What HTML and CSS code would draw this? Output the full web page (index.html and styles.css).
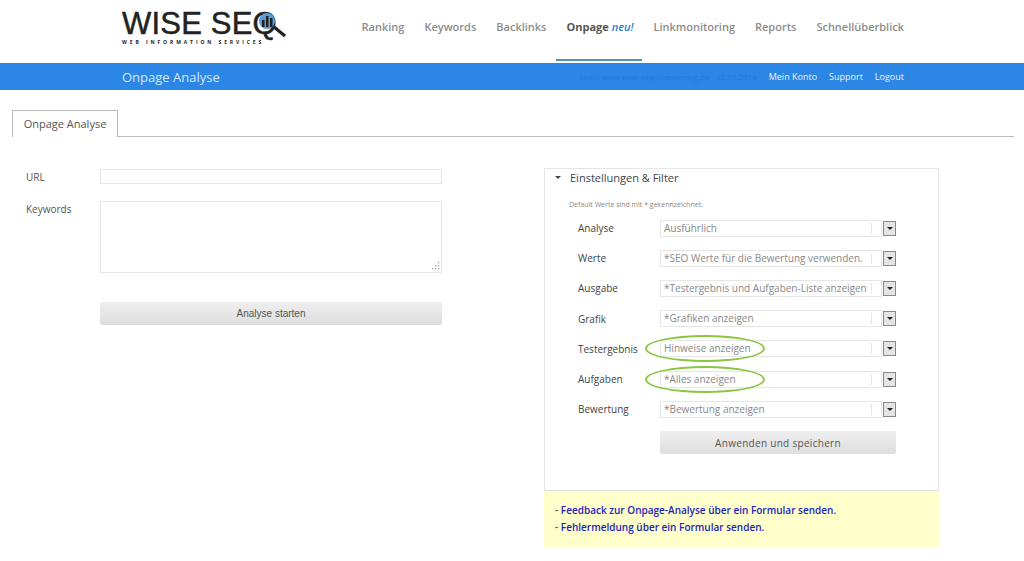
FILE: index.html
```html
<!DOCTYPE html>
<html lang="de">
<head>
  <meta charset="UTF-8">
  <title>Onpage Analyse</title>
  <link rel="stylesheet" href="styles.css">
</head>
<body>
  <!-- Logo and main navigation -->
  <header class="top">
    <div class="logo">
      <div class="logo-word">WISE SE<span class="logo-q">Q<svg class="logo-glass" viewBox="0 0 34 30" width="34" height="30">
        <circle cx="13" cy="13" r="8" fill="#5b9bd5"/>
        <rect x="8" y="12" width="2.5" height="7" fill="#222"/>
        <rect x="12" y="8" width="2.5" height="11" fill="#222"/>
        <rect x="16" y="10" width="2.5" height="9" fill="#222"/>
        <path d="M20 19 L31 28" stroke="#222" stroke-width="3.2" fill="none"/>
      </svg></span></div>
      <div class="logo-sub">WEB INFORMATION SERVICES</div>
    </div>
    <nav class="nav">
      <a>Ranking</a>
      <a>Keywords</a>
      <a>Backlinks</a>
      <a class="active">Onpage <em>neu!</em></a>
      <a>Linkmonitoring</a>
      <a>Reports</a>
      <a>Schnellüberblick</a>
    </nav>
  </header>

  <div class="bar">
    <div class="bar-title">Onpage Analyse</div>
    <div class="bar-hidden">Hallo www.wise-seq-monitoring.de &nbsp; 12.05.2014</div>
    <div class="bar-links">
      <a>Mein Konto</a>
      <a>Support</a>
      <a>Logout</a>
    </div>
  </div>

  <div class="tabs">
    <div class="tab">Onpage Analyse</div>
  </div>

  <main class="content">
    <!-- Left form -->
    <section class="form">
      <div class="form-row">
        <label>URL</label>
        <div class="field url"></div>
      </div>
      <div class="form-row">
        <label>Keywords</label>
        <div class="field keywords">
          <svg class="grip" viewBox="0 0 10 10" width="10" height="10">
            <g fill="#aaa">
              <rect x="8" y="1" width="1.4" height="1.4"/>
              <rect x="5" y="4" width="1.4" height="1.4"/>
              <rect x="8" y="4" width="1.4" height="1.4"/>
              <rect x="2" y="7" width="1.4" height="1.4"/>
              <rect x="5" y="7" width="1.4" height="1.4"/>
              <rect x="8" y="7" width="1.4" height="1.4"/>
            </g>
          </svg>
        </div>
      </div>
      <button class="btn start">Analyse starten</button>
    </section>

    <!-- Settings panel -->
    <section class="side">
      <div class="panel">
        <h2><span class="caret"></span>Einstellungen &amp; Filter</h2>
        <p class="hint">Default Werte sind mit * gekennzeichnet.</p>
        <div class="opt"><label>Analyse</label><div class="select"><span>Ausführlich</span></div><span class="arrow"></span></div>
        <div class="opt"><label>Werte</label><div class="select"><span>*SEO Werte für die Bewertung verwenden.</span></div><span class="arrow"></span></div>
        <div class="opt"><label>Ausgabe</label><div class="select"><span>*Testergebnis und Aufgaben-Liste anzeigen</span></div><span class="arrow"></span></div>
        <div class="opt"><label>Grafik</label><div class="select"><span>*Grafiken anzeigen</span></div><span class="arrow"></span></div>
        <div class="opt"><label>Testergebnis</label><div class="select"><span>Hinweise anzeigen</span><i class="ring"></i></div><span class="arrow"></span></div>
        <div class="opt"><label>Aufgaben</label><div class="select"><span>*Alles anzeigen</span><i class="ring"></i></div><span class="arrow"></span></div>
        <div class="opt"><label>Bewertung</label><div class="select"><span>*Bewertung anzeigen</span></div><span class="arrow"></span></div>
        <button class="btn apply">Anwenden und speichern</button>
      </div>
      <div class="note">
        <p>- <a>Feedback zur Onpage-Analyse über ein Formular senden.</a></p>
        <p>- <a>Fehlermeldung über ein Formular senden.</a></p>
      </div>
    </section>
  </main>
</body>
</html>
```

FILE: styles.css
```css
* {
  box-sizing: border-box;
}

body {
  margin: 0;
  background-color: #fff;
  color: #444;
  font-family: "Open Sans", Arial, sans-serif;
  font-size: 10px;
  overflow: hidden;
}

.top {
  display: flex;
  justify-content: space-between;
  height: 63px;
  padding: 0 120px 0 122px;
}

.logo {
  padding-top: 9px;
  color: #222;
}

.logo-word {
  font-family: "Liberation Sans", Arial, sans-serif;
  font-size: 31px;
  line-height: 30px;
  letter-spacing: 0.2px;
  white-space: nowrap;
  -webkit-text-stroke: 0.5px #222;
}

.logo-q {
  position: relative;
}

.logo-glass {
  position: absolute;
  left: 1px;
  top: 2px;
}

.logo-sub {
  font-size: 5px;
  font-weight: 700;
  line-height: 6px;
  letter-spacing: 2.9px;
  white-space: nowrap;
}

.nav {
  display: flex;
  gap: 20px;
  height: 63px;
  padding-top: 19px;
  font-size: 11px;
  font-weight: 600;
  color: #8c8c8c;
}

.nav a {
  position: relative;
  line-height: 16px;
}

.nav .active {
  color: #555;
  font-weight: 700;
}

.nav .active::after {
  content: "";
  position: absolute;
  left: -10px;
  right: -9px;
  top: 40px;
  height: 2px;
  background-color: #4f93b8;
}

.nav em {
  color: #2b7fd0;
  font-weight: 600;
}

.bar {
  display: flex;
  align-items: center;
  height: 27px;
  padding: 0 120px 0 122px;
  background-color: #2b86e6;
  color: #cfe6fb;
}

.bar-title {
  font-size: 13px;
  color: #d3e8fb;
}

.bar-hidden {
  margin-left: auto;
  margin-right: 12px;
  font-size: 8px;
  color: #1f7bdb;
  white-space: nowrap;
}

.bar-links {
  display: flex;
  gap: 12px;
  font-size: 9px;
  color: #eaf4fd;
}

.tabs {
  display: flex;
  height: 47px;
  margin: 0 10px 0 12px;
  padding-top: 20px;
  border-bottom: 1px solid #bbb;
}

.tab {
  width: 106px;
  height: 27px;
  border: 1px solid #bbb;
  border-bottom: none;
  background-color: #fff;
  font-size: 11px;
  line-height: 26px;
  text-align: center;
  color: #555;
}

.content {
  display: flex;
  padding: 31px 0 0 26px;
}

.form {
  width: 416px;
  padding-top: 1px;
}

.form-row {
  display: flex;
  margin-bottom: 16px;
}

.form-row label {
  width: 74px;
  font-size: 10px;
  line-height: 16px;
  color: #555;
}

.field {
  position: relative;
  width: 342px;
  border: 1px solid #e6e6e6;
}

.url {
  height: 15px;
}

.keywords {
  height: 72px;
}

.grip {
  position: absolute;
  right: 1px;
  bottom: 1px;
}

.btn {
  display: block;
  height: 23px;
  border: none;
  border-radius: 2px;
  background: linear-gradient(#eeeeee, #dedede);
  color: #555;
  font-family: "Liberation Sans", Arial, sans-serif;
  font-size: 10px;
}

.start {
  width: 342px;
  margin: 29px 0 0 74px;
}

.side {
  width: 395px;
  margin-left: 102px;
}

.panel {
  height: 323px;
  padding: 0 0 0 10px;
  border: 1px solid #e6e6e6;
  border-bottom-color: #ddd;
}

.panel h2 {
  display: flex;
  align-items: center;
  margin: 0;
  font-size: 11px;
  font-weight: 400;
  line-height: 17px;
  color: #444;
}

.caret {
  width: 0;
  height: 0;
  margin-right: 9px;
  border-left: 3px solid transparent;
  border-right: 3px solid transparent;
  border-top: 3px solid #444;
}

.hint {
  margin: 14px 0 3px 14px;
  font-size: 7px;
  line-height: 10px;
  color: #888;
}

.opt {
  display: flex;
  align-items: center;
  height: 30.2px;
  padding-left: 23px;
}

.opt label {
  width: 82px;
  font-size: 10px;
  color: #444;
}

.select {
  position: relative;
  width: 222px;
  height: 17px;
  padding-left: 3px;
  border: 1px solid #e6e6e6;
  font-size: 10px;
  line-height: 15px;
  color: #888;
  white-space: nowrap;
}

.select::after {
  content: "";
  position: absolute;
  right: 9px;
  top: 2px;
  bottom: 2px;
  width: 1px;
  background-color: #e6e6e6;
}

.arrow {
  position: relative;
  width: 13px;
  height: 15px;
  margin-left: 1px;
  border: 1px solid #888;
  background-color: #e4e4e4;
}

.arrow::after {
  content: "";
  position: absolute;
  left: 3px;
  top: 5px;
  border-left: 3px solid transparent;
  border-right: 3px solid transparent;
  border-top: 3px solid #222;
}

.ring {
  position: absolute;
  left: -16px;
  top: -6px;
  width: 120px;
  height: 27px;
  border: 2px solid #8cc63f;
  border-radius: 50%;
}

.apply {
  width: 236px;
  margin: 7px 0 0 105px;
  font-family: "Open Sans", Arial, sans-serif;
  letter-spacing: 0.3px;
}

.note {
  height: 56px;
  padding: 11px 0 0 11px;
  background-color: #ffffcc;
  color: #555;
  font-size: 10px;
  font-weight: 600;
}

.note p {
  margin: 0;
  line-height: 17px;
}

.note a {
  color: #2222bb;
}
```
